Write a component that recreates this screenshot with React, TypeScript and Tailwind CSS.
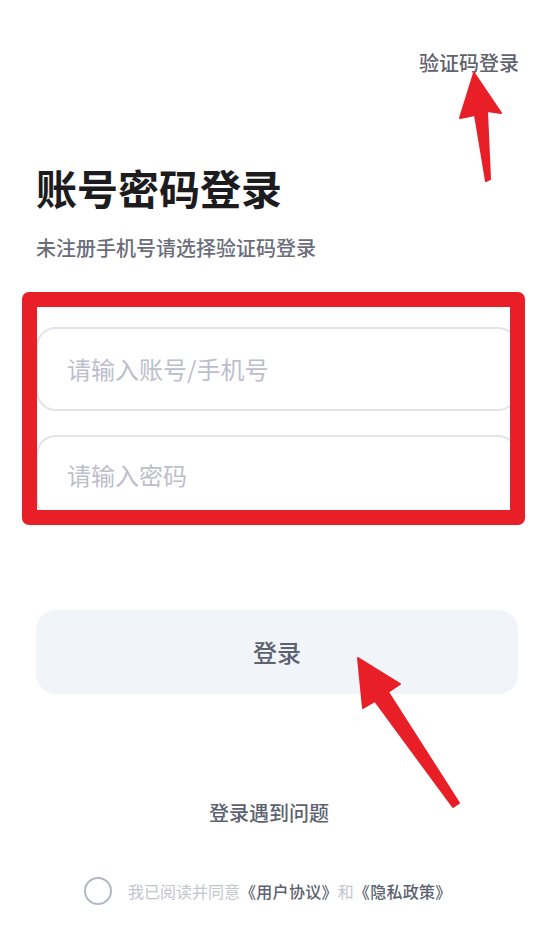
export default function App() {
  return (
    <div
      className="relative w-[554px] h-[941px] overflow-hidden bg-white"
      style={{ fontFamily: '"Noto Sans CJK SC", "Noto Sans", sans-serif' }}
    >
      {/* 顶部切换 */}
      <div className="flex justify-end pt-[49px] pr-[35px]">
        <span className="text-[20px] leading-[28px] font-medium text-[#5f6370]">验证码登录</span>
      </div>

      <div className="px-9">
        <h1 className="mt-[82px] text-[41px] leading-[56px] font-bold text-[#1c1c1e]">账号密码登录</h1>
        <p className="mt-[19px] text-[20px] leading-[28px] font-medium text-[#6b6e7a]">未注册手机号请选择验证码登录</p>

        {/* 输入框 */}
        <div className="mt-[65px] flex flex-col gap-[24px]">
          <div className="h-[84px] rounded-[20px] border-2 border-[#e3e4e9] flex items-center pl-[29px]">
            <span className="text-[24px] text-[#bcbecb]">请输入账号/手机号</span>
          </div>
          <div className="h-[84px] rounded-[20px] border-2 border-[#e3e4e9] flex items-center pl-[29px] pb-[4px]">
            <span className="text-[24px] text-[#bcbecb]">请输入密码</span>
          </div>
        </div>

        <button className="mt-[91px] w-full h-[84px] rounded-[20px] bg-[#f1f4f8] text-[24px] font-medium text-[#5d6270]">
          登录
        </button>

        <div className="mt-[105px] pr-[16px] text-center text-[20px] leading-[28px] font-medium text-[#5d6270]">登录遇到问题</div>

        <div className="mt-[50px] flex items-center pl-[48px]">
          <span className="w-[28px] h-[28px] rounded-full border-2 border-[#b4b7c7]" />
          <p className="ml-[16px] text-[16px] text-[#c3c5ce]">
            我已阅读并同意
            <span className="font-medium text-[#5d6270] tracking-[0.3px]">《用户协议》</span>和
            <span className="font-medium text-[#5d6270] tracking-[0.3px]">《隐私政策》</span>
          </p>
        </div>
      </div>

      {/* 标注框 */}
      <div className="absolute left-[22px] top-[292px] w-[503px] h-[233px] rounded-[7px] border-[15px] border-[#e81f27]" />

      {/* 标注箭头 */}
      <svg className="absolute inset-0" width="554" height="941" viewBox="0 0 554 941">
        <polygon
          points="474,73 501,113 487,111 490,179 486,181 475,115 460,118"
          fill="#e81f27"
          stroke="#e81f27"
          strokeWidth="2"
          strokeLinejoin="round"
        />
        <polygon
          points="358,658 400,684 388,692 459,803 453,807 375,701 363,708"
          fill="#e81f27"
          stroke="#e81f27"
          strokeWidth="2"
          strokeLinejoin="round"
        />
      </svg>
    </div>
  )
}
